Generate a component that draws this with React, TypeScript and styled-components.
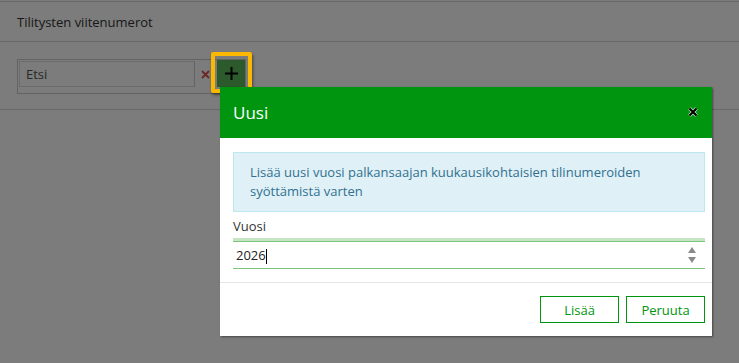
import React from "react";
import styled, { createGlobalStyle } from "styled-components";

const GlobalStyle = createGlobalStyle`
    html, body {
        margin: 0;
        padding: 0;
        background: #ffffff;
        font-family: "Open Sans", "Noto Sans", sans-serif;
        font-size: 13px;
        color: #333;
    }
`;

const Page = styled.div`
    position: relative;
    width: 739px;
    height: 363px;
    overflow: hidden;
    background: #fff;
`;

const Panel = styled.div`
    margin-top: 1px;
    border-top: 1px solid #d8d8d8;
`;

const PanelHeader = styled.div`
    height: 39px;
    display: flex;
    align-items: center;
    padding: 0 17px;
    border-bottom: 1px solid #d8d8d8;
    color: #333;
`;

const Toolbar = styled.div`
    height: 68px;
    padding: 17px 0 0 17px;
    box-sizing: border-box;
    border-bottom: 1px solid #d8d8d8;
    display: flex;
    align-items: flex-start;
`;

const SearchGroup = styled.div`
    display: flex;
    align-items: flex-start;
    border: 1px solid #ccc;
    padding: 1px 0 5px 1px;
    height: 27px;
`;

const SearchInput = styled.div`
    width: 176px;
    height: 26px;
    border: 1px solid #ddd;
    border-right: 1px solid #ccc;
    display: flex;
    align-items: center;
    padding-left: 6px;
    box-sizing: border-box;
    color: #555;
`;

const ClearButton = styled.div`
    width: 22px;
    height: 26px;
    display: flex;
    align-items: center;
    padding-left: 6px;
    box-sizing: border-box;
`;

const AddButton = styled.div`
    width: 28px;
    height: 27px;
    background: #5cba5c;
    display: flex;
    align-items: center;
    justify-content: center;
    margin-top: -1px;
`;

const Backdrop = styled.div`
    position: absolute;
    inset: 0;
    background: rgba(0, 0, 0, 0.515);
`;

const Highlight = styled.div`
    position: absolute;
    left: 211px;
    top: 52px;
    width: 41px;
    height: 41px;
    box-sizing: border-box;
    border: 4px solid #fbb800;
    border-radius: 2px;
    box-shadow: 1px 2px 3px rgba(0, 0, 0, 0.45);
`;

const Modal = styled.div`
    position: absolute;
    left: 220px;
    top: 87px;
    width: 492px;
    background: #fff;
    box-shadow: 1px 1px 2px rgba(0, 0, 0, 0.45);
`;

const ModalHeader = styled.div`
    height: 51px;
    background: #00950e;
    display: flex;
    align-items: center;
    justify-content: space-between;
    padding: 0 13px;
    color: #fff;
`;

const ModalTitle = styled.div`
    font-size: 17px;
    margin-top: -1px;
`;

const Close = styled.div`
    display: flex;
    margin-right: 1px;
    margin-top: -2px;
`;

const ModalBody = styled.div`
    padding: 14px 7px 13px 13px;
`;

const Info = styled.div`
    background: #dff0f7;
    border: 1px solid #bce8f1;
    color: #31708f;
    padding: 10px 16px;
    line-height: 19px;
    height: 60px;
    box-sizing: border-box;
`;

const Label = styled.div`
    margin-top: 6px;
    line-height: 16px;
    color: #333;
`;

const FieldBar = styled.div`
    margin-top: 4px;
    height: 3px;
    background: #c5e5c3;
`;

const Field = styled.div`
    height: 26px;
    border-top: 1px solid #7cc67c;
    border-bottom: 1px solid #7cc67c;
    display: flex;
    align-items: center;
    justify-content: space-between;
    padding: 0 8px 0 3px;
    color: #222;
`;

const Caret = styled.span`
    display: inline-block;
    width: 1px;
    height: 15px;
    background: #000;
    vertical-align: middle;
`;

const ModalFooter = styled.div`
    border-top: 1px solid #e5e5e5;
    padding: 13px 7px 13px 0;
    display: flex;
    justify-content: flex-end;
    gap: 7px;
`;

const OutlineButton = styled.div`
    width: 79px;
    height: 27px;
    box-sizing: border-box;
    border: 1.5px solid #00950e;
    color: #00950e;
    display: flex;
    align-items: center;
    justify-content: center;
`;

const App = () => {
    return (
        <Page>
            <GlobalStyle />
            <Panel>
                <PanelHeader>Tilitysten viitenumerot</PanelHeader>
                <Toolbar>
                    <SearchGroup>
                        <SearchInput>Etsi</SearchInput>
                        <ClearButton>
                            <svg width="9" height="9" viewBox="0 0 9 9">
                                <path d="M1 1 L8 8 M8 1 L1 8" stroke="#d9534f" strokeWidth="1.8" />
                            </svg>
                        </ClearButton>
                        <AddButton>
                            <svg width="13" height="13" viewBox="0 0 13 13">
                                <path d="M6.5 0 V13 M0 6.5 H13" stroke="#000" strokeWidth="2" />
                            </svg>
                        </AddButton>
                    </SearchGroup>
                </Toolbar>
            </Panel>
            <Backdrop />
            <Highlight />
            <Modal>
                <ModalHeader>
                    <ModalTitle>Uusi</ModalTitle>
                    <Close>
                        <svg width="10" height="10" viewBox="0 0 10 10">
                            <path d="M1.5 1.5 L8.5 8.5 M8.5 1.5 L1.5 8.5" stroke="#bfe8bf" strokeWidth="3.6" />
                            <path d="M1.5 1.5 L8.5 8.5 M8.5 1.5 L1.5 8.5" stroke="#000" strokeWidth="2.2" />
                        </svg>
                    </Close>
                </ModalHeader>
                <ModalBody>
                    <Info>
                        Lisää uusi vuosi palkansaajan kuukausikohtaisien tilinumeroiden
                        <br />
                        syöttämistä varten
                    </Info>
                    <Label>Vuosi</Label>
                    <FieldBar />
                    <Field>
                        <span>
                            2026
                            <Caret />
                        </span>
                        <svg width="10" height="18" viewBox="0 0 10 18">
                            <path d="M5 1 L9 7 H1 Z" fill="#8a8a8a" />
                            <path d="M5 17 L9 11 H1 Z" fill="#8a8a8a" />
                        </svg>
                    </Field>
                </ModalBody>
                <ModalFooter>
                    <OutlineButton>Lisää</OutlineButton>
                    <OutlineButton>Peruuta</OutlineButton>
                </ModalFooter>
            </Modal>
        </Page>
    );
};

export default App;
